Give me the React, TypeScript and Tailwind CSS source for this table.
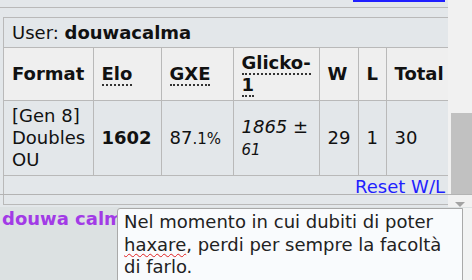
import type { ReactNode } from 'react';

function Th({ children, w }: { children: ReactNode; w: string }) {
  return (
    <th className={`${w} border-r border-[#b9b9b9] px-2 py-1 text-left align-middle font-bold leading-[22px]`}>
      {children}
    </th>
  );
}

function Td({ children }: { children: ReactNode }) {
  return <td className="border-r border-[#b9b9b9] px-2 py-1 align-middle leading-[22px]">{children}</td>;
}

export default function App() {
  return (
    <div className="relative w-[472px] h-[280px] overflow-hidden bg-[#dce1e2] font-['DejaVu_Sans',sans-serif] text-[18px] text-[#111]">
      <div className="flex h-[207px]">
        {/* ladder panel */}
        <div className="w-[448px] bg-[#e3e7ea] overflow-hidden">
          <div className="h-[8px] border-b border-[#b9b9b9] flex justify-end pr-[3px]">
            <span className="w-[92px] h-[2px] bg-[#1f1fff]" />
          </div>
          <div className="h-[9px]" />
          <section className="ml-[3px] border-l border-t border-b border-[#b9b9b9]">
            <div className="h-[30px] px-2 flex items-center border-b border-[#b9b9b9] whitespace-nowrap">
              User:&nbsp;<b>douwacalma</b>
            </div>
            <table className="w-[445px] table-fixed border-collapse">
              <thead>
                <tr className="bg-[#efefef] border-b border-[#b9b9b9]">
                  <Th w="w-[89px]">Format</Th>
                  <Th w="w-[68px]">
                    <abbr className="no-underline border-b-2 border-dotted border-[#333]">Elo</abbr>
                  </Th>
                  <Th w="w-[72px]">
                    <abbr className="no-underline border-b-2 border-dotted border-[#333]">GXE</abbr>
                  </Th>
                  <Th w="w-[86px]">
                    <abbr className="no-underline border-b-2 border-dotted border-[#333]">
                      Glicko-
                      <br />1
                    </abbr>
                  </Th>
                  <Th w="w-[39px]">W</Th>
                  <Th w="w-[28px]">L</Th>
                  <Th w="w-[63px]">Total</Th>
                </tr>
              </thead>
              <tbody>
                <tr className="border-b border-[#b9b9b9]">
                  <Td>
                    [Gen 8]
                    <br />
                    Doubles
                    <br />
                    OU
                  </Td>
                  <Td>
                    <b>1602</b>
                  </Td>
                  <Td>
                    87<small className="text-[15px]">.1%</small>
                  </Td>
                  <Td>
                    <em>1865</em> ±
                    <br />
                    <small className="text-[15px] italic">61</small>
                  </Td>
                  <Td>29</Td>
                  <Td>1</Td>
                  <Td>30</Td>
                </tr>
              </tbody>
            </table>
            <div className="h-[28px] flex justify-end items-start pr-[3px]">
              <a className="text-[#1f1fff] underline leading-[22px] cursor-pointer">Reset W/L</a>
            </div>
          </section>
        </div>

        {/* scrollbar */}
        <div className="w-[24px] bg-[#f1f1f1] flex flex-col items-center">
          <div className="h-[113px]" />
          <div className="w-[21px] h-[81px] ml-[2px] bg-[#c1c1c1]" />
          <div className="flex-1" />
          <svg width="10" height="5" viewBox="0 0 10 5">
            <polygon points="0,0 10,0 5,5" fill="#a3a3a3" />
          </svg>
        </div>
      </div>

      <div className="absolute left-0 top-[194px] w-full h-px bg-[#b3b3b3]" />

      {/* chat entry */}
      <div className="flex h-[73px] pt-px">
        <div className="w-[117px] overflow-hidden whitespace-nowrap pl-[2px] font-bold text-[#a23be6] leading-[22px]">
          douwa calma:
        </div>
        <div className="w-[346px] h-[80px] bg-[#f9fbfd] border border-[#a9a9a9] rounded-tl-[3px] px-[6px] pt-[2px] leading-[22.5px] text-[#222]">
          Nel momento in cui dubiti di poter{' '}
          <span className="underline decoration-wavy decoration-[#e02020] decoration-1 underline-offset-2">haxare</span>,
          perdi per sempre la facoltà di farlo.
        </div>
        <div className="flex-1 bg-[#f2f3f3]" />
      </div>
    </div>
  );
}
